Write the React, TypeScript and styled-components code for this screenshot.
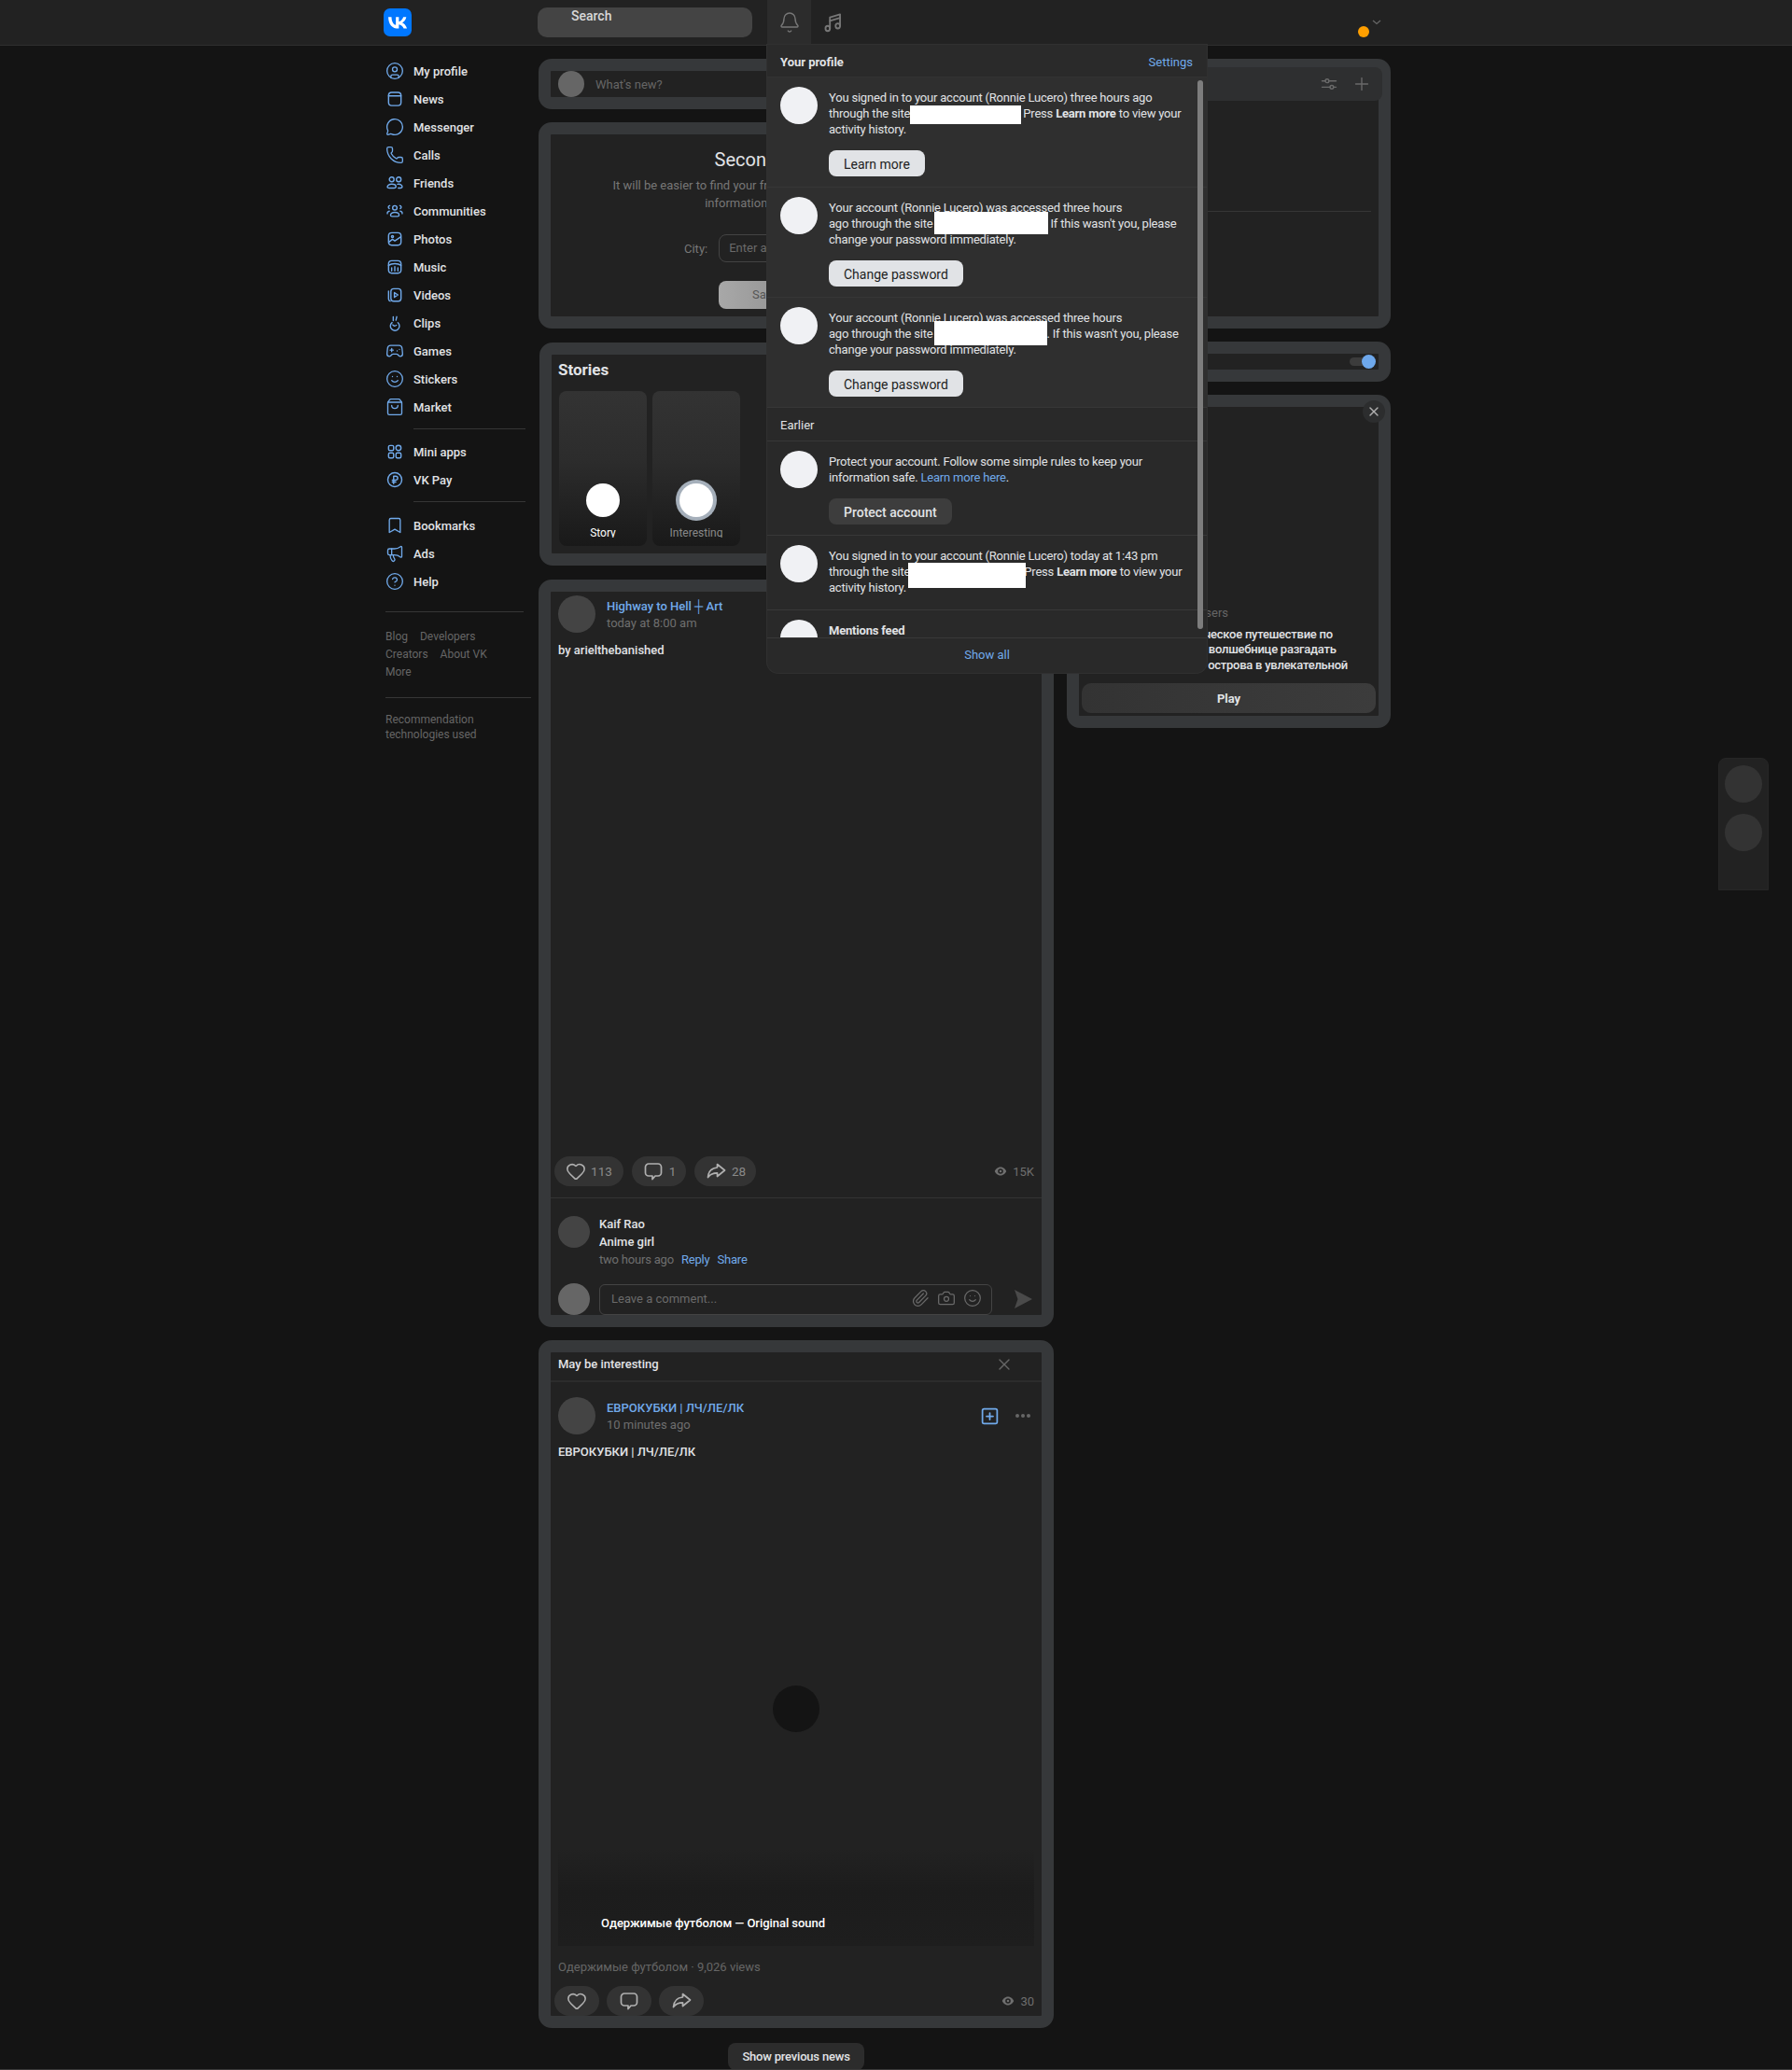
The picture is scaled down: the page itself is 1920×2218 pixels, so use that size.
import React from "react";
import styled, { createGlobalStyle } from "styled-components";
import {
  Bell,
  Bookmark,
  Camera,
  CircleHelp,
  CircleUser,
  Gamepad2,
  Heart,
  Megaphone,
  MessageCircle,
  Paperclip,
  Phone,
  Plus,
  ShoppingBag,
  Smile,
  SquarePlus,
  X,
} from "lucide-react";

const GlobalStyle = createGlobalStyle`
  * { box-sizing: border-box; }
  body {
    margin: 0;
    background: #141414;
    font-family: Roboto, "Noto Sans", "Liberation Sans", sans-serif;
    font-size: 13px;
    color: #e1e3e6;
  }
`;

const Page = styled.div`
  position: relative;
  height: 2218px;
  overflow: hidden;
  background: #141414;
  border-bottom: 1px solid #3a3a3a;
`;

const Header = styled.header`
  display: flex;
  height: 49px;
  padding-left: 411px;
  background: #222222;
  border-bottom: 1px solid #2f2f2f;
`;

const Logo = styled.svg`
  width: 30px;
  height: 30px;
  margin-top: 9px;
  flex: none;
`;

const Search = styled.div`
  width: 230px;
  height: 32px;
  margin: 8px 16px 0 135px;
  padding-left: 36px;
  border-radius: 10px;
  background: #444444;
  color: #d8d8d8;
  font-size: 14px;
  font-weight: 500;
  line-height: 18px;
`;

const TopTab = styled.div<{ $active?: boolean }>`
  display: flex;
  align-items: center;
  justify-content: center;
  width: 47px;
  height: 48px;
  color: #777777;
  background: ${(p) => (p.$active ? "#2c2c2c" : "transparent")};
`;

const UserDot = styled.div`
  width: 12px;
  height: 12px;
  margin: 28px 0 0 539px;
  border-radius: 50%;
  background: #ff9f00;
`;

const Chevron = styled.svg`
  width: 10px;
  height: 6px;
  margin: 21px 0 0 3px;
`;

const Layout = styled.div`
  display: grid;
  grid-template-columns: 150px 552px 347px;
  column-gap: 14px;
  align-items: start;
  padding-left: 413px;
`;

const Sidebar = styled.nav`
  padding-top: 12px;
`;

const NavItem = styled.div`
  display: flex;
  align-items: center;
  height: 30px;
  gap: 10px;
  font-weight: 500;
  color: #e1e3e6;
  svg {
    flex: none;
    color: #71aaeb;
  }
`;

const NavRule = styled.div<{ $after: number }>`
  height: 1px;
  width: 120px;
  margin: 8px 0 ${(p) => p.$after}px 30px;
  background: #363636;
`;

const SideRule = styled.div<{ $w: number; $top: number }>`
  height: 1px;
  width: ${(p) => p.$w}px;
  margin-top: ${(p) => p.$top}px;
  background: #363636;
`;

const FootLinks = styled.div`
  display: flex;
  flex-wrap: wrap;
  max-width: 140px;
  column-gap: 13px;
  padding-top: 17px;
  font-size: 12px;
  line-height: 19px;
  color: #666666;
`;

const FootNote = styled.div`
  padding-top: 15px;
  font-size: 12px;
  line-height: 16px;
  color: #666666;
`;

const Column = styled.main`
  display: flex;
  flex-direction: column;
  gap: 14px;
  padding-top: 14px;
`;

const Card = styled.section`
  position: relative;
  border: 13px solid #36383a;
  border-radius: 14px;
  background: #222222;
`;

const ComposeBar = styled.div`
  display: flex;
  align-items: center;
  gap: 12px;
  height: 28px;
  padding-left: 8px;
  color: #666666;
`;

const Avatar = styled.div<{ $size: number; $tone?: string }>`
  flex: none;
  width: ${(p) => p.$size}px;
  height: ${(p) => p.$size}px;
  border-radius: 50%;
  background: ${(p) => p.$tone || "#444444"};
`;

const CityForm = styled.div`
  height: 195px;
  padding-top: 16px;
  text-align: center;
`;

const CityTitle = styled.div`
  font-size: 20px;
  line-height: 22px;
`;

const CityHint = styled.div`
  margin-top: 7px;
  line-height: 19px;
  color: #777777;
`;

const CityRow = styled.div`
  display: flex;
  align-items: center;
  gap: 12px;
  margin-top: 24px;
  padding-left: 143px;
  color: #777777;
`;

const CityInput = styled.div`
  width: 240px;
  height: 30px;
  padding-left: 10px;
  border: 1px solid #444444;
  border-radius: 8px;
  text-align: left;
  line-height: 28px;
  color: #6a6a6a;
`;

const SaveButton = styled.div`
  width: 100px;
  height: 30px;
  margin: 20px 0 0 180px;
  border-radius: 8px;
  background: linear-gradient(90deg, #a8a8a8, #8c8c8c);
  color: #555555;
  line-height: 30px;
  text-align: center;
`;

const StoriesCard = styled(Card)`
  margin: 1px 0 1px 1px;
  height: 239px;
`;

const StoriesTitle = styled.div`
  padding: 6px 0 0 7px;
  font-size: 17px;
  font-weight: 700;
  line-height: 20px;
`;

const StoryRow = styled.div`
  display: flex;
  gap: 6px;
  margin: 13px 0 0 8px;
`;

const StoryTile = styled.div`
  display: flex;
  flex-direction: column;
  align-items: center;
  width: 94px;
  height: 166px;
  padding-top: 99px;
  border-radius: 8px;
  background: linear-gradient(180deg, #333333 0%, #2c2c2c 45%, #191919 100%);
`;

const StoryDot = styled.div<{ $ring?: boolean }>`
  width: 36px;
  height: 36px;
  border-radius: 50%;
  background: #ffffff;
  box-shadow: ${(p) => (p.$ring ? "0 0 0 4px #a5afba" : "none")};
`;

const StoryLabel = styled.div<{ $muted?: boolean }>`
  height: 13px;
  margin-top: 9px;
  overflow: hidden;
  font-size: 12px;
  line-height: 16px;
  color: ${(p) => (p.$muted ? "#8a8a8a" : "#ffffff")};
`;

const PostHead = styled.div`
  display: flex;
  align-items: center;
  gap: 12px;
  padding: 4px 8px 0;
`;

const AuthorBox = styled.div`
  flex: 1;
  padding-top: 1px;
  line-height: 18px;
`;

const AuthorName = styled.div`
  font-weight: 500;
  color: #71aaeb;
`;

const Meta = styled.div`
  color: #6f6f6f;
`;

const PostText = styled.div`
  margin-top: 9px;
  padding-left: 8px;
  font-weight: 500;
  line-height: 20px;
`;

const MediaGap = styled.div`
  height: 532px;
`;

const Actions = styled.div<{ $gap: number }>`
  display: flex;
  align-items: center;
  gap: ${(p) => p.$gap}px;
  height: 32px;
  padding: 0 8px 0 4px;
`;

const Pill = styled.div<{ $w: number }>`
  display: flex;
  align-items: center;
  justify-content: center;
  gap: 5px;
  width: ${(p) => p.$w}px;
  height: 32px;
  border-radius: 16px;
  background: #333333;
  color: #8a8a8a;
  font-size: 13.5px;
  svg {
    color: #b0b0b0;
  }
`;

const Views = styled.div`
  display: flex;
  align-items: center;
  gap: 6px;
  margin-left: auto;
  color: #6f6f6f;
`;

const Rule = styled.div`
  height: 1px;
  margin-top: 12px;
  background: #333333;
`;

const CommentRow = styled.div`
  display: flex;
  gap: 10px;
  padding: 18px 8px 0;
  line-height: 19px;
`;

const CommentAvatar = styled(Avatar)`
  margin-top: 1px;
`;

const CommentName = styled.div`
  font-weight: 500;
`;

const CommentBody = styled.div`
  font-weight: 500;
`;

const CommentMeta = styled.div`
  display: flex;
  gap: 8px;
  color: #6f6f6f;
  letter-spacing: -0.2px;
  line-height: 20px;
`;

const BlueLink = styled.span`
  color: #71aaeb;
`;

const InputRow = styled.div`
  display: flex;
  align-items: center;
  gap: 10px;
  margin-top: 15px;
  padding-left: 8px;
`;

const CommentInput = styled.div`
  display: flex;
  align-items: center;
  gap: 8px;
  width: 421px;
  height: 33px;
  padding: 0 10px 2px 12px;
  border: 1px solid #444444;
  border-radius: 6px;
  color: #6a6a6a;
  svg {
    color: #6a6a6a;
  }
`;

const InputText = styled.span`
  flex: 1;
`;

const SendIcon = styled.svg`
  width: 20px;
  height: 20px;
  margin-left: 13px;
`;

const InterestHead = styled.div`
  display: flex;
  align-items: center;
  justify-content: space-between;
  height: 32px;
  padding: 0 30px 5px 8px;
  border-bottom: 2px solid #2c2c2c;
  font-weight: 500;
  color: #e1e3e6;
  svg {
    color: #666666;
  }
`;

const HeadTools = styled.div`
  display: flex;
  align-items: center;
  gap: 16px;
  margin-right: 3px;
  color: #71aaeb;
`;

const Dots = styled.svg`
  width: 18px;
  height: 6px;
`;

const InterestPost = styled(PostHead)`
  padding-top: 16px;
`;

const Video = styled.div`
  position: relative;
  display: flex;
  flex-direction: column;
  justify-content: flex-end;
  height: 519px;
  margin: 0 8px;
`;

const PlayDot = styled.div`
  position: absolute;
  top: 240px;
  left: 230px;
  width: 50px;
  height: 50px;
  border-radius: 50%;
  background: #141414;
`;

const Caption = styled.div`
  height: 105px;
  padding: 73px 0 0 46px;
  background: linear-gradient(180deg, rgba(28, 28, 28, 0) 0%, #1c1c1c 45%, #1e1e1e 100%);
  color: #ffffff;
  font-weight: 500;
  letter-spacing: -0.05px;
  line-height: 16px;
`;

const SourceLine = styled.div`
  margin-top: 14px;
  padding-left: 8px;
  color: #666666;
  line-height: 18px;
`;

const InterestActions = styled(Actions)`
  margin-top: 11px;
`;

const MorePill = styled.div`
  align-self: center;
  margin-top: 2px;
  padding: 0 15px;
  height: 29px;
  border-radius: 8px;
  background: #2c2c2c;
  font-weight: 500;
  letter-spacing: -0.2px;
  line-height: 29px;
`;

const RightBar = styled.div`
  position: absolute;
  top: -4px;
  right: -4px;
  left: 0;
  display: flex;
  align-items: center;
  justify-content: flex-end;
  gap: 14px;
  height: 36px;
  padding-right: 11px;
  border-radius: 0 8px 8px 0;
  background: #2e2f30;
  color: #6a6a6a;
`;

const RightFill = styled.div<{ $h: number; $rule?: boolean }>`
  height: ${(p) => p.$h}px;
  margin-right: 8px;
  border-bottom: ${(p) => (p.$rule ? "1px solid #363636" : "none")};
`;

const ToggleRow = styled.div`
  display: flex;
  align-items: center;
  justify-content: flex-end;
  height: 17px;
  padding-right: 5px;
`;

const Track = styled.div`
  position: relative;
  width: 26px;
  height: 9px;
  border-radius: 5px;
  background: #3c3c3c;
`;

const Knob = styled.div`
  position: absolute;
  top: -3px;
  right: -2px;
  width: 15px;
  height: 15px;
  border-radius: 50%;
  background: #6ea8ec;
`;

const GameCard = styled(Card)`
  display: flex;
  flex-direction: column;
  justify-content: flex-end;
  height: 357px;
  padding: 0 3px 3px;
`;

const CloseBadge = styled.div`
  position: absolute;
  top: -7px;
  right: -7px;
  display: flex;
  align-items: center;
  justify-content: center;
  width: 24px;
  height: 24px;
  border-radius: 50%;
  background: #2c2d2e;
  color: #b0b0b0;
`;

const GameUsers = styled.div`
  padding-left: 7px;
  line-height: 16px;
  color: #666666;
`;

const GameDesc = styled.div`
  margin: 7px 0 11px;
  padding-left: 7px;
  font-size: 13px;
  font-weight: 500;
  letter-spacing: -0.25px;
  line-height: 16.5px;
  white-space: nowrap;
`;

const PlayButton = styled.div`
  height: 32px;
  border-radius: 10px;
  background: linear-gradient(90deg, #333333, #3c3c3c);
  font-weight: 700;
  line-height: 34px;
  text-align: center;
`;

const Popup = styled.aside`
  position: absolute;
  top: 48px;
  left: 822px;
  display: flex;
  flex-direction: column;
  width: 471px;
  height: 673px;
  overflow: hidden;
  border-radius: 0 0 12px 12px;
  background: #292929;
  box-shadow: 0 0 0 1px #303030;
`;

const PopupHead = styled.div`
  display: flex;
  align-items: center;
  justify-content: space-between;
  flex: none;
  height: 35px;
  padding: 3px 15px 0 14px;
  background: #2a2a2a;
  border-bottom: 1px solid #333333;
  font-weight: 700;
`;

const SettingsLink = styled(BlueLink)`
  font-weight: 400;
`;

const PopupList = styled.div`
  position: relative;
  flex: none;
  height: 600px;
  overflow: hidden;
`;

const ScrollThumb = styled.div`
  position: absolute;
  top: 3px;
  right: 4px;
  width: 6px;
  height: 588px;
  border-radius: 3px;
  background: #7d7d7d;
`;

const Notice = styled.div<{ $unread?: boolean; $h: number }>`
  display: flex;
  gap: 12px;
  height: ${(p) => p.$h}px;
  padding: 10px 14px;
  background: ${(p) => (p.$unread ? "#2f2f2f" : "#292929")};
  border-bottom: 1px solid ${(p) => (p.$unread ? "#363636" : "#383838")};
`;

const NoticeText = styled.div`
  padding-top: 3px;
  letter-spacing: -0.2px;
  line-height: 17px;
  white-space: nowrap;
`;

const Redact = styled.span<{ $w: number; $top: number; $h: number; $left: number; $bw: number }>`
  position: relative;
  display: inline-block;
  width: ${(p) => p.$w}px;
  height: 0;
  &::after {
    content: "";
    position: absolute;
    left: ${(p) => p.$left}px;
    top: ${(p) => p.$top}px;
    width: ${(p) => p.$bw}px;
    height: ${(p) => p.$h}px;
    background: #ffffff;
  }
`;

const NoticeButton = styled.div<{ $light?: boolean }>`
  display: inline-block;
  margin-top: 14px;
  height: 28px;
  padding: 0 16px;
  border-radius: 8px;
  background: ${(p) => (p.$light ? "#e1e3e6" : "#3d3d3d")};
  color: ${(p) => (p.$light ? "#222222" : "#e1e3e6")};
  font-size: 14px;
  font-weight: ${(p) => (p.$light ? 400 : 500)};
  letter-spacing: 0;
  line-height: 30px;
`;

const SectionLabel = styled.div`
  height: 36px;
  padding-left: 14px;
  line-height: 37px;
  background: #292929;
  border-bottom: 1px solid #383838;
`;

const PopupFoot = styled.div`
  flex: 1;
  border-top: 1px solid #383838;
  color: #71aaeb;
  line-height: 35px;
  text-align: center;
`;

const SideDock = styled.div`
  position: absolute;
  top: 812px;
  right: 25px;
  display: flex;
  flex-direction: column;
  align-items: center;
  gap: 12px;
  width: 54px;
  height: 142px;
  padding-top: 7px;
  border-radius: 8px 8px 0 0;
  background: #222222;
  border: 1px solid #262626;
`;

type IconProps = { size?: number };

const Stroke = ({ size = 20, children }: IconProps & { children: React.ReactNode }) => (
  <svg
    width={size}
    height={size}
    viewBox="0 0 24 24"
    fill="none"
    stroke="currentColor"
    strokeWidth={1.7}
    strokeLinecap="round"
    strokeLinejoin="round"
  >
    {children}
  </svg>
);

const NotesIcon = () => (
  <Stroke size={26}>
    <path d="M8.500 18V7l10-3v11.500" />
    <path d="M8.500 10.500l10-3" />
    <ellipse cx="6.300" cy="18" rx="2.200" ry="2.500" />
    <ellipse cx="16.300" cy="15.500" rx="2.200" ry="2.500" />
  </Stroke>
);

const NewsIcon = () => (
  <Stroke>
    <rect x="4" y="3.5" width="16" height="17" rx="4" />
    <path d="M4 8h16" />
  </Stroke>
);

const FriendsIcon = () => (
  <Stroke>
    <circle cx="8" cy="7.5" r="3" />
    <circle cx="17" cy="7.5" r="3" />
    <path d="M2.5 17c0-2.2 2.4-3.5 5.5-3.5s5.5 1.3 5.5 3.3c0 1.4-1 1.7-2.5 1.7H5c-1.500 0-2.500-.2-2.500-1.500z" />
    <path d="M15.500 13.700c3.300-.6 6 .8 6 3.100 0 1.300-.9 1.700-2.400 1.700h-2.600" />
  </Stroke>
);

const CommunitiesIcon = () => (
  <Stroke>
    <circle cx="12" cy="8" r="2.800" />
    <path d="M6.500 17.500c0-2.300 2.400-3.700 5.500-3.700s5.500 1.400 5.500 3.700c0 1-.8 1.500-2 1.500h-7c-1.200 0-2-.5-2-1.500z" />
    <path d="M5.500 5.200a2 2 0 0 0-.6 3.800M18.500 5.200a2 2 0 0 1 .6 3.800M2.500 15.500c-.4-1.500.6-2.800 2.500-3.200M21.500 15.500c.4-1.500-.6-2.800-2.500-3.200" />
  </Stroke>
);

const PhotosIcon = () => (
  <Stroke>
    <rect x="4" y="4" width="16" height="16" rx="4" />
    <circle cx="9" cy="9" r="1.300" />
    <path d="M4.500 16l4.500-3.500 3 2 7.500-5" />
  </Stroke>
);

const MusicBoxIcon = () => (
  <Stroke>
    <rect x="4" y="4" width="16" height="16" rx="4" />
    <path d="M4 10c4-3 12-3 16 0M8 13v4M12 11.500V17M16 13v4" />
  </Stroke>
);

const VideosIcon = () => (
  <Stroke>
    <rect x="7" y="4" width="13" height="16" rx="3.500" />
    <path d="M4 7v10c0 1.500.8 2.500 2 3M11.500 9l4.500 3-4.500 3z" />
  </Stroke>
);

const ClipsIcon = () => (
  <Stroke>
    <path d="M10 4v5M14.500 4L13.500 8.500" />
    <path d="M8.500 11.500a5.800 5.800 0 1 0 7.500.2" />
    <path d="M9.500 14.500c1 1.300 3 1.500 4.500.5" />
  </Stroke>
);

const AppsIcon = () => (
  <Stroke>
    <rect x="4" y="4" width="6.500" height="6.500" rx="1.800" />
    <circle cx="16.700" cy="7.200" r="3.300" />
    <rect x="4" y="13.500" width="6.500" height="6.500" rx="1.800" />
    <rect x="13.500" y="13.500" width="6.500" height="6.500" rx="1.800" />
  </Stroke>
);

const PayIcon = () => (
  <Stroke>
    <circle cx="12" cy="12" r="9" />
    <path d="M10.500 17V7.500h2.700a2.500 2.500 0 0 1 0 5H8.800M8.800 15h4.500" />
  </Stroke>
);

const ShareIcon = () => (
  <Stroke size={24}>
    <path d="M13.500 4.500L21.500 11l-8 6.500v-3.700c-4 0-7.500 1.300-10 4.700.5-6 4-10 10-10.500z" />
  </Stroke>
);

const CommentIcon = () => (
  <Stroke size={24}>
    <path d="M7 4h10a3.500 3.500 0 0 1 3.500 3.500v6a3.500 3.500 0 0 1-3.500 3.500h-3l-3 3.500V17H7a3.500 3.500 0 0 1-3.500-3.500v-6A3.500 3.500 0 0 1 7 4z" />
  </Stroke>
);

const EyeIcon = () => (
  <svg width="14" height="14" viewBox="0 0 14 14" fill="currentColor">
    <path d="M7 2.500C3.800 2.500 1.500 5 .8 7c.7 2 3 4.500 6.200 4.500S12.500 9 13.200 7C12.500 5 10.200 2.500 7 2.500zm0 7.300A2.800 2.800 0 1 1 7 4.200a2.800 2.800 0 0 1 0 5.600zm0-1.500a1.300 1.300 0 1 0 0-2.600 1.300 1.300 0 0 0 0 2.600z" />
  </svg>
);

const SlidersIcon = () => (
  <Stroke>
    <path d="M3 8h4M12 8h9M3 16h10M18 16h3" />
    <circle cx="9.500" cy="8" r="2.300" />
    <circle cx="15.500" cy="16" r="2.300" />
  </Stroke>
);

const navTop = [
  { label: "My profile", icon: <CircleUser size={20} strokeWidth={1.6} /> },
  { label: "News", icon: <NewsIcon /> },
  { label: "Messenger", icon: <MessageCircle size={20} strokeWidth={1.6} /> },
  { label: "Calls", icon: <Phone size={20} strokeWidth={1.6} /> },
  { label: "Friends", icon: <FriendsIcon /> },
  { label: "Communities", icon: <CommunitiesIcon /> },
  { label: "Photos", icon: <PhotosIcon /> },
  { label: "Music", icon: <MusicBoxIcon /> },
  { label: "Videos", icon: <VideosIcon /> },
  { label: "Clips", icon: <ClipsIcon /> },
  { label: "Games", icon: <Gamepad2 size={20} strokeWidth={1.6} /> },
  { label: "Stickers", icon: <Smile size={20} strokeWidth={1.6} /> },
  { label: "Market", icon: <ShoppingBag size={20} strokeWidth={1.6} /> },
];

const navMid = [
  { label: "Mini apps", icon: <AppsIcon /> },
  { label: "VK Pay", icon: <PayIcon /> },
];

const navBottom = [
  { label: "Bookmarks", icon: <Bookmark size={20} strokeWidth={1.6} /> },
  { label: "Ads", icon: <Megaphone size={20} strokeWidth={1.6} /> },
  { label: "Help", icon: <CircleHelp size={20} strokeWidth={1.6} /> },
];

function NavGroup({ items }: { items: { label: string; icon: React.ReactNode }[] }) {
  return (
    <>
      {items.map((item) => (
        <NavItem key={item.label}>
          {item.icon}
          {item.label}
        </NavItem>
      ))}
    </>
  );
}

function NotificationsPopup() {
  return (
    <Popup>
      <PopupHead>
        Your profile
        <SettingsLink>Settings</SettingsLink>
      </PopupHead>
      <PopupList>
        <Notice $unread $h={118}>
          <Avatar $size={40} $tone="#f0f1f4" />
          <NoticeText>
            You signed in to your account (Ronnie Lucero) three hours ago
            <br />
            through the site
            <Redact $w={121} $left={0} $bw={119} $top={-13} $h={20} />
            Press <b>Learn more</b> to view your
            <br />
            activity history.
            <br />
            <NoticeButton $light>Learn more</NoticeButton>
          </NoticeText>
        </Notice>
        <Notice $unread $h={118}>
          <Avatar $size={40} $tone="#f0f1f4" />
          <NoticeText>
            Your account (Ronnie Lucero) was accessed three hours
            <br />
            ago through the site
            <Redact $w={126} $left={1} $bw={122} $top={-17} $h={24} />
            If this wasn't you, please
            <br />
            change your password immediately.
            <br />
            <NoticeButton $light>Change password</NoticeButton>
          </NoticeText>
        </Notice>
        <Notice $unread $h={118}>
          <Avatar $size={40} $tone="#f0f1f4" />
          <NoticeText>
            Your account (Ronnie Lucero) was accessed three hours
            <br />
            ago through the site
            <Redact $w={122} $left={1} $bw={121} $top={-18} $h={26} />. If this wasn't you, please
            <br />
            change your password immediately.
            <br />
            <NoticeButton $light>Change password</NoticeButton>
          </NoticeText>
        </Notice>
        <SectionLabel>Earlier</SectionLabel>
        <Notice $h={101}>
          <Avatar $size={40} $tone="#f0f1f4" />
          <NoticeText>
            Protect your account. Follow some simple rules to keep your
            <br />
            information safe. <BlueLink>Learn more here</BlueLink>.
            <br />
            <NoticeButton>Protect account</NoticeButton>
          </NoticeText>
        </Notice>
        <Notice $h={80}>
          <Avatar $size={40} $tone="#f0f1f4" />
          <NoticeText>
            You signed in to your account (Ronnie Lucero) today at 1:43 pm
            <br />
            through the site
            <Redact $w={122} $left={-2} $bw={126} $top={-14} $h={27} />
            Press <b>Learn more</b> to view your
            <br />
            activity history.
          </NoticeText>
        </Notice>
        <Notice $h={60}>
          <Avatar $size={40} $tone="#f0f1f4" />
          <NoticeText>
            <b>Mentions feed</b>
          </NoticeText>
        </Notice>
        <ScrollThumb />
      </PopupList>
      <PopupFoot>Show all</PopupFoot>
    </Popup>
  );
}

export default function App() {
  return (
    <Page>
      <GlobalStyle />
      <Header>
        <Logo viewBox="0 0 48 48">
          <rect width="48" height="48" rx="11" fill="#0077ff" />
          <path
            fill="#ffffff"
            d="M25.540 34.580c-10.940 0-17.180-7.500-17.440-19.980h5.480c.18 9.160 4.220 13.040 7.420 13.840V14.600h5.160v7.900c3.160-.34 6.480-3.940 7.600-7.900h5.160c-.86 4.880-4.460 8.480-7.020 9.960 2.560 1.200 6.660 4.340 8.220 10.020h-5.680c-1.220-3.800-4.260-6.740-8.280-7.140v7.140h-.62z"
          />
        </Logo>
        <Search>Search</Search>
        <TopTab $active>
          <Bell size={24} strokeWidth={1.4} />
        </TopTab>
        <TopTab>
          <NotesIcon />
        </TopTab>
        <UserDot />
        <Chevron viewBox="0 0 10 6" fill="none" stroke="#666666" strokeWidth="1.3">
          <path d="M1 1l4 3.500L9 1" />
        </Chevron>
      </Header>

      <Layout>
        <Sidebar>
          <NavGroup items={navTop} />
          <NavRule $after={9} />
          <NavGroup items={navMid} />
          <NavRule $after={10} />
          <NavGroup items={navBottom} />
          <SideRule $w={148} $top={17} />
          <FootLinks>
            <span>Blog</span>
            <span>Developers</span>
            <span>Creators</span>
            <span>About VK</span>
            <span>More</span>
          </FootLinks>
          <SideRule $w={156} $top={17} />
          <FootNote>
            Recommendation
            <br />
            technologies used
          </FootNote>
        </Sidebar>

        <Column>
          <Card>
            <ComposeBar>
              <Avatar $size={28} $tone="#666666" />
              What's new?
            </ComposeBar>
          </Card>

          <Card>
            <CityForm>
              <CityTitle>Second home cities</CityTitle>
              <CityHint>
                It will be easier to find your friends, classmates and coworkers if you
                <br />
                information about where you lived
              </CityHint>
              <CityRow>
                City:
                <CityInput>Enter a city</CityInput>
              </CityRow>
              <SaveButton>Save</SaveButton>
            </CityForm>
          </Card>

          <StoriesCard>
            <StoriesTitle>Stories</StoriesTitle>
            <StoryRow>
              <StoryTile>
                <StoryDot />
                <StoryLabel>Story</StoryLabel>
              </StoryTile>
              <StoryTile>
                <StoryDot $ring />
                <StoryLabel $muted>Interesting</StoryLabel>
              </StoryTile>
            </StoryRow>
          </StoriesCard>

          <Card>
            <PostHead>
              <Avatar $size={40} />
              <AuthorBox>
                <AuthorName>Highway to Hell ┼ Art</AuthorName>
                <Meta>today at 8:00 am</Meta>
              </AuthorBox>
            </PostHead>
            <PostText>by arielthebanished</PostText>
            <MediaGap />
            <Actions $gap={9}>
              <Pill $w={74}>
                <Heart size={22} strokeWidth={1.7} />
                113
              </Pill>
              <Pill $w={58}>
                <CommentIcon />1
              </Pill>
              <Pill $w={66}>
                <ShareIcon />
                28
              </Pill>
              <Views>
                <EyeIcon />
                15K
              </Views>
            </Actions>
            <Rule />
            <CommentRow>
              <CommentAvatar $size={34} />
              <div>
                <CommentName>Kaif Rao</CommentName>
                <CommentBody>Anime girl</CommentBody>
                <CommentMeta>
                  two hours ago
                  <BlueLink>Reply</BlueLink>
                  <BlueLink>Share</BlueLink>
                </CommentMeta>
              </div>
            </CommentRow>
            <InputRow>
              <Avatar $size={34} $tone="#666666" />
              <CommentInput>
                <InputText>Leave a comment...</InputText>
                <Paperclip size={20} strokeWidth={1.5} />
                <Camera size={20} strokeWidth={1.5} />
                <Smile size={20} strokeWidth={1.5} />
              </CommentInput>
              <SendIcon viewBox="0 0 20 20" fill="#4a4a4a">
                <path d="M1 0l19 10L1 20l3.500-10z" />
              </SendIcon>
            </InputRow>
          </Card>

          <Card>
            <InterestHead>
              May be interesting
              <X size={20} strokeWidth={1.6} />
            </InterestHead>
            <InterestPost>
              <Avatar $size={40} />
              <AuthorBox>
                <AuthorName>ЕВРОКУБКИ | ЛЧ/ЛЕ/ЛК</AuthorName>
                <Meta>10 minutes ago</Meta>
              </AuthorBox>
              <HeadTools>
                <SquarePlus size={21} strokeWidth={2} />
                <Dots viewBox="0 0 18 6" fill="#666666">
                  <circle cx="3" cy="3" r="2" />
                  <circle cx="9" cy="3" r="2" />
                  <circle cx="15" cy="3" r="2" />
                </Dots>
              </HeadTools>
            </InterestPost>
            <PostText>ЕВРОКУБКИ | ЛЧ/ЛЕ/ЛК</PostText>
            <Video>
              <PlayDot />
              <Caption>Одержимые футболом — Original sound</Caption>
            </Video>
            <SourceLine>Одержимые футболом · 9,026 views</SourceLine>
            <InterestActions $gap={8}>
              <Pill $w={48}>
                <Heart size={22} strokeWidth={1.7} />
              </Pill>
              <Pill $w={48}>
                <CommentIcon />
              </Pill>
              <Pill $w={48}>
                <ShareIcon />
              </Pill>
              <Views>
                <EyeIcon />
                30
              </Views>
            </InterestActions>
          </Card>

          <MorePill>Show previous news</MorePill>
        </Column>

        <Column>
          <Card>
            <RightBar>
              <SlidersIcon />
              <Plus size={22} strokeWidth={1.5} />
            </RightBar>
            <RightFill $h={151} $rule />
            <RightFill $h={112} />
          </Card>
          <Card>
            <ToggleRow>
              <Track>
                <Knob />
              </Track>
            </ToggleRow>
          </Card>
          <GameCard>
            <CloseBadge>
              <X size={16} strokeWidth={2} />
            </CloseBadge>
            <GameUsers>Adventure · 356,000 users</GameUsers>
            <GameDesc>
              Увлекательное, магическое путешествие по
              <br />
              Помогите маленькой волшебнице разгадать
              <br />
              секреты волшебного острова в увлекательной
            </GameDesc>
            <PlayButton>Play</PlayButton>
          </GameCard>
        </Column>
      </Layout>

      <NotificationsPopup />
      <SideDock>
        <Avatar $size={40} $tone="#333333" />
        <Avatar $size={40} $tone="#333333" />
      </SideDock>
    </Page>
  );
}
